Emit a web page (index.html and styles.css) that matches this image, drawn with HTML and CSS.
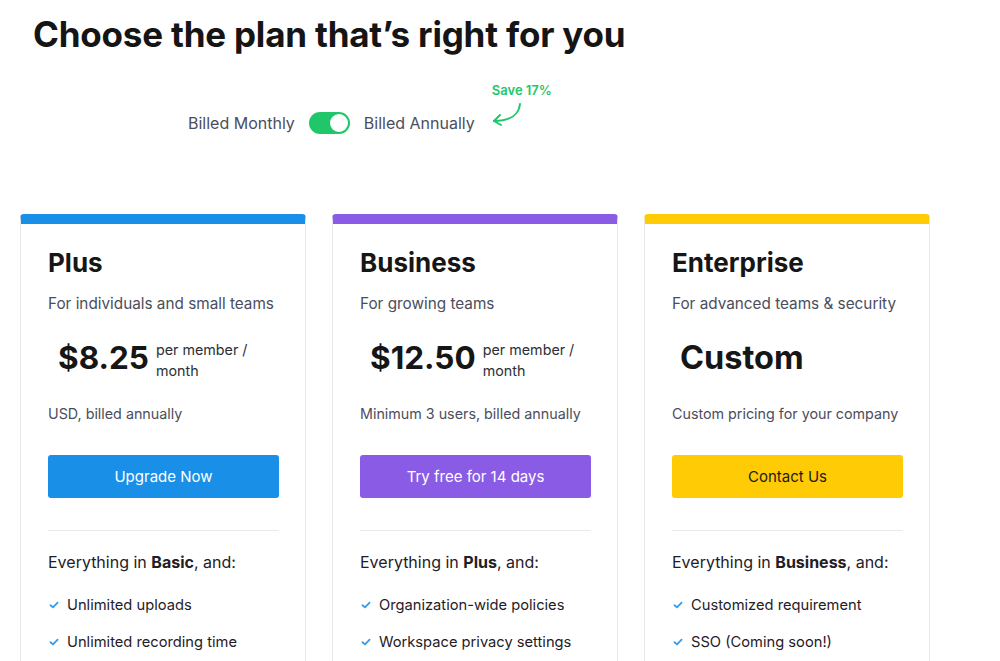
FILE: index.html
```html
<!DOCTYPE html>
<html lang="en">
<head>
<meta charset="utf-8">
<title>Pricing</title>
<link rel="stylesheet" href="styles.css">
</head>
<body>
<header class="header">
  <h1 class="title">Choose the plan that’s right for you</h1>
  <div class="billing">
    <span class="billing-label">Billed Monthly</span>
    <span class="switch"><span class="knob"></span></span>
    <span class="billing-label">Billed Annually</span>
    <span class="save">
      <span class="save-text">Save 17%</span>
      <svg class="save-arrow" width="34" height="26" viewBox="0 0 34 26" fill="none" stroke="#1fc76a" stroke-width="2" stroke-linecap="round" stroke-linejoin="round">
        <path d="M29 2 C28 12 20 19 3 19"/>
        <path d="M9 13 L3 19 L10 23"/>
      </svg>
    </span>
  </div>
</header>

<main class="plans">
  <section class="card card-plus">
    <h2 class="plan-name">Plus</h2>
    <p class="plan-desc">For individuals and small teams</p>
    <div class="price-row">
      <span class="price">$8.25</span>
      <span class="per">per member /<br>month</span>
    </div>
    <p class="note">USD, billed annually</p>
    <button class="btn btn-blue">Upgrade Now</button>
    <hr class="divider">
    <p class="includes">Everything in <b>Basic</b>, and:</p>
    <ul class="features">
      <li><svg class="check" viewBox="0 0 10 8" width="10" height="8"><path d="M1.5 4.2 L4 6.4 L8.6 1.6" fill="none" stroke="#3a9be8" stroke-width="1.8" stroke-linecap="round" stroke-linejoin="round"/></svg>Unlimited uploads</li>
      <li><svg class="check" viewBox="0 0 10 8" width="10" height="8"><path d="M1.5 4.2 L4 6.4 L8.6 1.6" fill="none" stroke="#3a9be8" stroke-width="1.8" stroke-linecap="round" stroke-linejoin="round"/></svg>Unlimited recording time</li>
    </ul>
  </section>

  <section class="card card-business">
    <h2 class="plan-name">Business</h2>
    <p class="plan-desc">For growing teams</p>
    <div class="price-row">
      <span class="price">$12.50</span>
      <span class="per">per member /<br>month</span>
    </div>
    <p class="note">Minimum 3 users, billed annually</p>
    <button class="btn btn-purple">Try free for 14 days</button>
    <hr class="divider">
    <p class="includes">Everything in <b>Plus</b>, and:</p>
    <ul class="features">
      <li><svg class="check" viewBox="0 0 10 8" width="10" height="8"><path d="M1.5 4.2 L4 6.4 L8.6 1.6" fill="none" stroke="#3a9be8" stroke-width="1.8" stroke-linecap="round" stroke-linejoin="round"/></svg>Organization-wide policies</li>
      <li><svg class="check" viewBox="0 0 10 8" width="10" height="8"><path d="M1.5 4.2 L4 6.4 L8.6 1.6" fill="none" stroke="#3a9be8" stroke-width="1.8" stroke-linecap="round" stroke-linejoin="round"/></svg>Workspace privacy settings</li>
    </ul>
  </section>

  <section class="card card-enterprise">
    <h2 class="plan-name">Enterprise</h2>
    <p class="plan-desc">For advanced teams &amp; security</p>
    <div class="price-row price-row-custom">
      <span class="price">Custom</span>
    </div>
    <p class="note">Custom pricing for your company</p>
    <button class="btn btn-yellow">Contact Us</button>
    <hr class="divider">
    <p class="includes">Everything in <b>Business</b>, and:</p>
    <ul class="features">
      <li><svg class="check" viewBox="0 0 10 8" width="10" height="8"><path d="M1.5 4.2 L4 6.4 L8.6 1.6" fill="none" stroke="#3a9be8" stroke-width="1.8" stroke-linecap="round" stroke-linejoin="round"/></svg>Customized requirement</li>
      <li><svg class="check" viewBox="0 0 10 8" width="10" height="8"><path d="M1.5 4.2 L4 6.4 L8.6 1.6" fill="none" stroke="#3a9be8" stroke-width="1.8" stroke-linecap="round" stroke-linejoin="round"/></svg>SSO (Coming soon!)</li>
    </ul>
  </section>
</main>
</body>
</html>
```

FILE: styles.css
```css
* { box-sizing: border-box; }

html, body {
  margin: 0;
  padding: 0;
  background: #ffffff;
  overflow: hidden;
}

body {
  font-family: Inter, "Open Sans", sans-serif;
  color: #1b1b1f;
  height: 661px;
}

.header {
  padding: 12px 0 0 33px;
}

.title {
  margin: 0;
  font-size: 35px;
  line-height: 44px;
  font-weight: 700;
  letter-spacing: -0.2px;
  color: #151515;
}

.billing {
  display: flex;
  align-items: center;
  margin-top: 55px;
  margin-left: 155px;
  position: relative;
}

.billing-label {
  font-size: 16px;
  color: #4a4e5c;
  line-height: 24px;
}

.switch {
  width: 41px;
  height: 22px;
  border-radius: 11px;
  background: #1fc76a;
  margin: 0 14px;
  display: flex;
  align-items: center;
  justify-content: flex-end;
  padding: 2px;
}

.knob {
  width: 18px;
  height: 18px;
  border-radius: 50%;
  background: #ffffff;
}

.save {
  position: relative;
  width: 80px;
  height: 24px;
  margin-left: 16px;
}

.save-text {
  position: absolute;
  left: 1px;
  top: -29px;
  font-size: 13px;
  font-weight: 600;
  color: #1fc76a;
  white-space: nowrap;
}

.save-arrow {
  position: absolute;
  left: 0;
  top: -9px;
}

.plans {
  display: flex;
  gap: 26px;
  padding-left: 20px;
  margin-top: 79px;
}

.card {
  width: 286px;
  flex: none;
  border: 1px solid #e6e7ea;
  border-top: 10px solid #1a8fe8;
  border-radius: 4px 4px 0 0;
  padding: 23px 27px 40px 27px;
  height: 460px;
}

.card-business { border-top-color: #8a5be4; }
.card-enterprise { border-top-color: #ffcb05; }

.plan-name {
  margin: 0;
  font-size: 26px;
  line-height: 32px;
  font-weight: 700;
  color: #161616;
}

.plan-desc {
  margin: 13px 0 0;
  font-size: 15.3px;
  line-height: 24px;
  color: #4a4e5c;
  white-space: nowrap;
}

.price-row {
  display: flex;
  align-items: flex-start;
  margin-top: 22px;
  padding-left: 10px;
  height: 40px;
}

.price-row-custom { padding-left: 8px; }

.price {
  font-size: 31.5px;
  line-height: 40px;
  font-weight: 700;
  color: #161616;
}

.price-row-custom .price { font-size: 32.5px; }

.per {
  margin-left: 7px;
  margin-top: 1px;
  font-size: 14.3px;
  line-height: 21px;
  color: #2d2f36;
}

.note {
  margin: 24px 0 0;
  font-size: 14.3px;
  line-height: 24px;
  color: #4a4e5c;
  white-space: nowrap;
}

.btn {
  display: block;
  width: 231px;
  height: 43px;
  margin-top: 29px;
  border: none;
  border-radius: 3px;
  font-family: inherit;
  font-size: 15px;
  color: #ffffff;
  cursor: pointer;
}

.btn-blue { background: #1a8fe8; }
.btn-purple { background: #8a5be4; }
.btn-yellow { background: #ffcb05; color: #1b1b1f; }

.divider {
  border: none;
  border-top: 1px solid #e8e9ec;
  margin: 32px 0 0;
  width: 231px;
}

.includes {
  margin: 19px 0 0;
  font-size: 16px;
  line-height: 24px;
  color: #1f2026;
  white-space: nowrap;
}

.includes b { font-weight: 700; }

.features {
  list-style: none;
  margin: 19px 0 0;
  padding: 0;
}

.features li {
  display: flex;
  align-items: center;
  font-size: 14.7px;
  line-height: 24px;
  color: #1f2026;
  margin-bottom: 13px;
  white-space: nowrap;
}

.check {
  margin-left: 1px;
  margin-right: 8px;
  flex: none;
}
```
